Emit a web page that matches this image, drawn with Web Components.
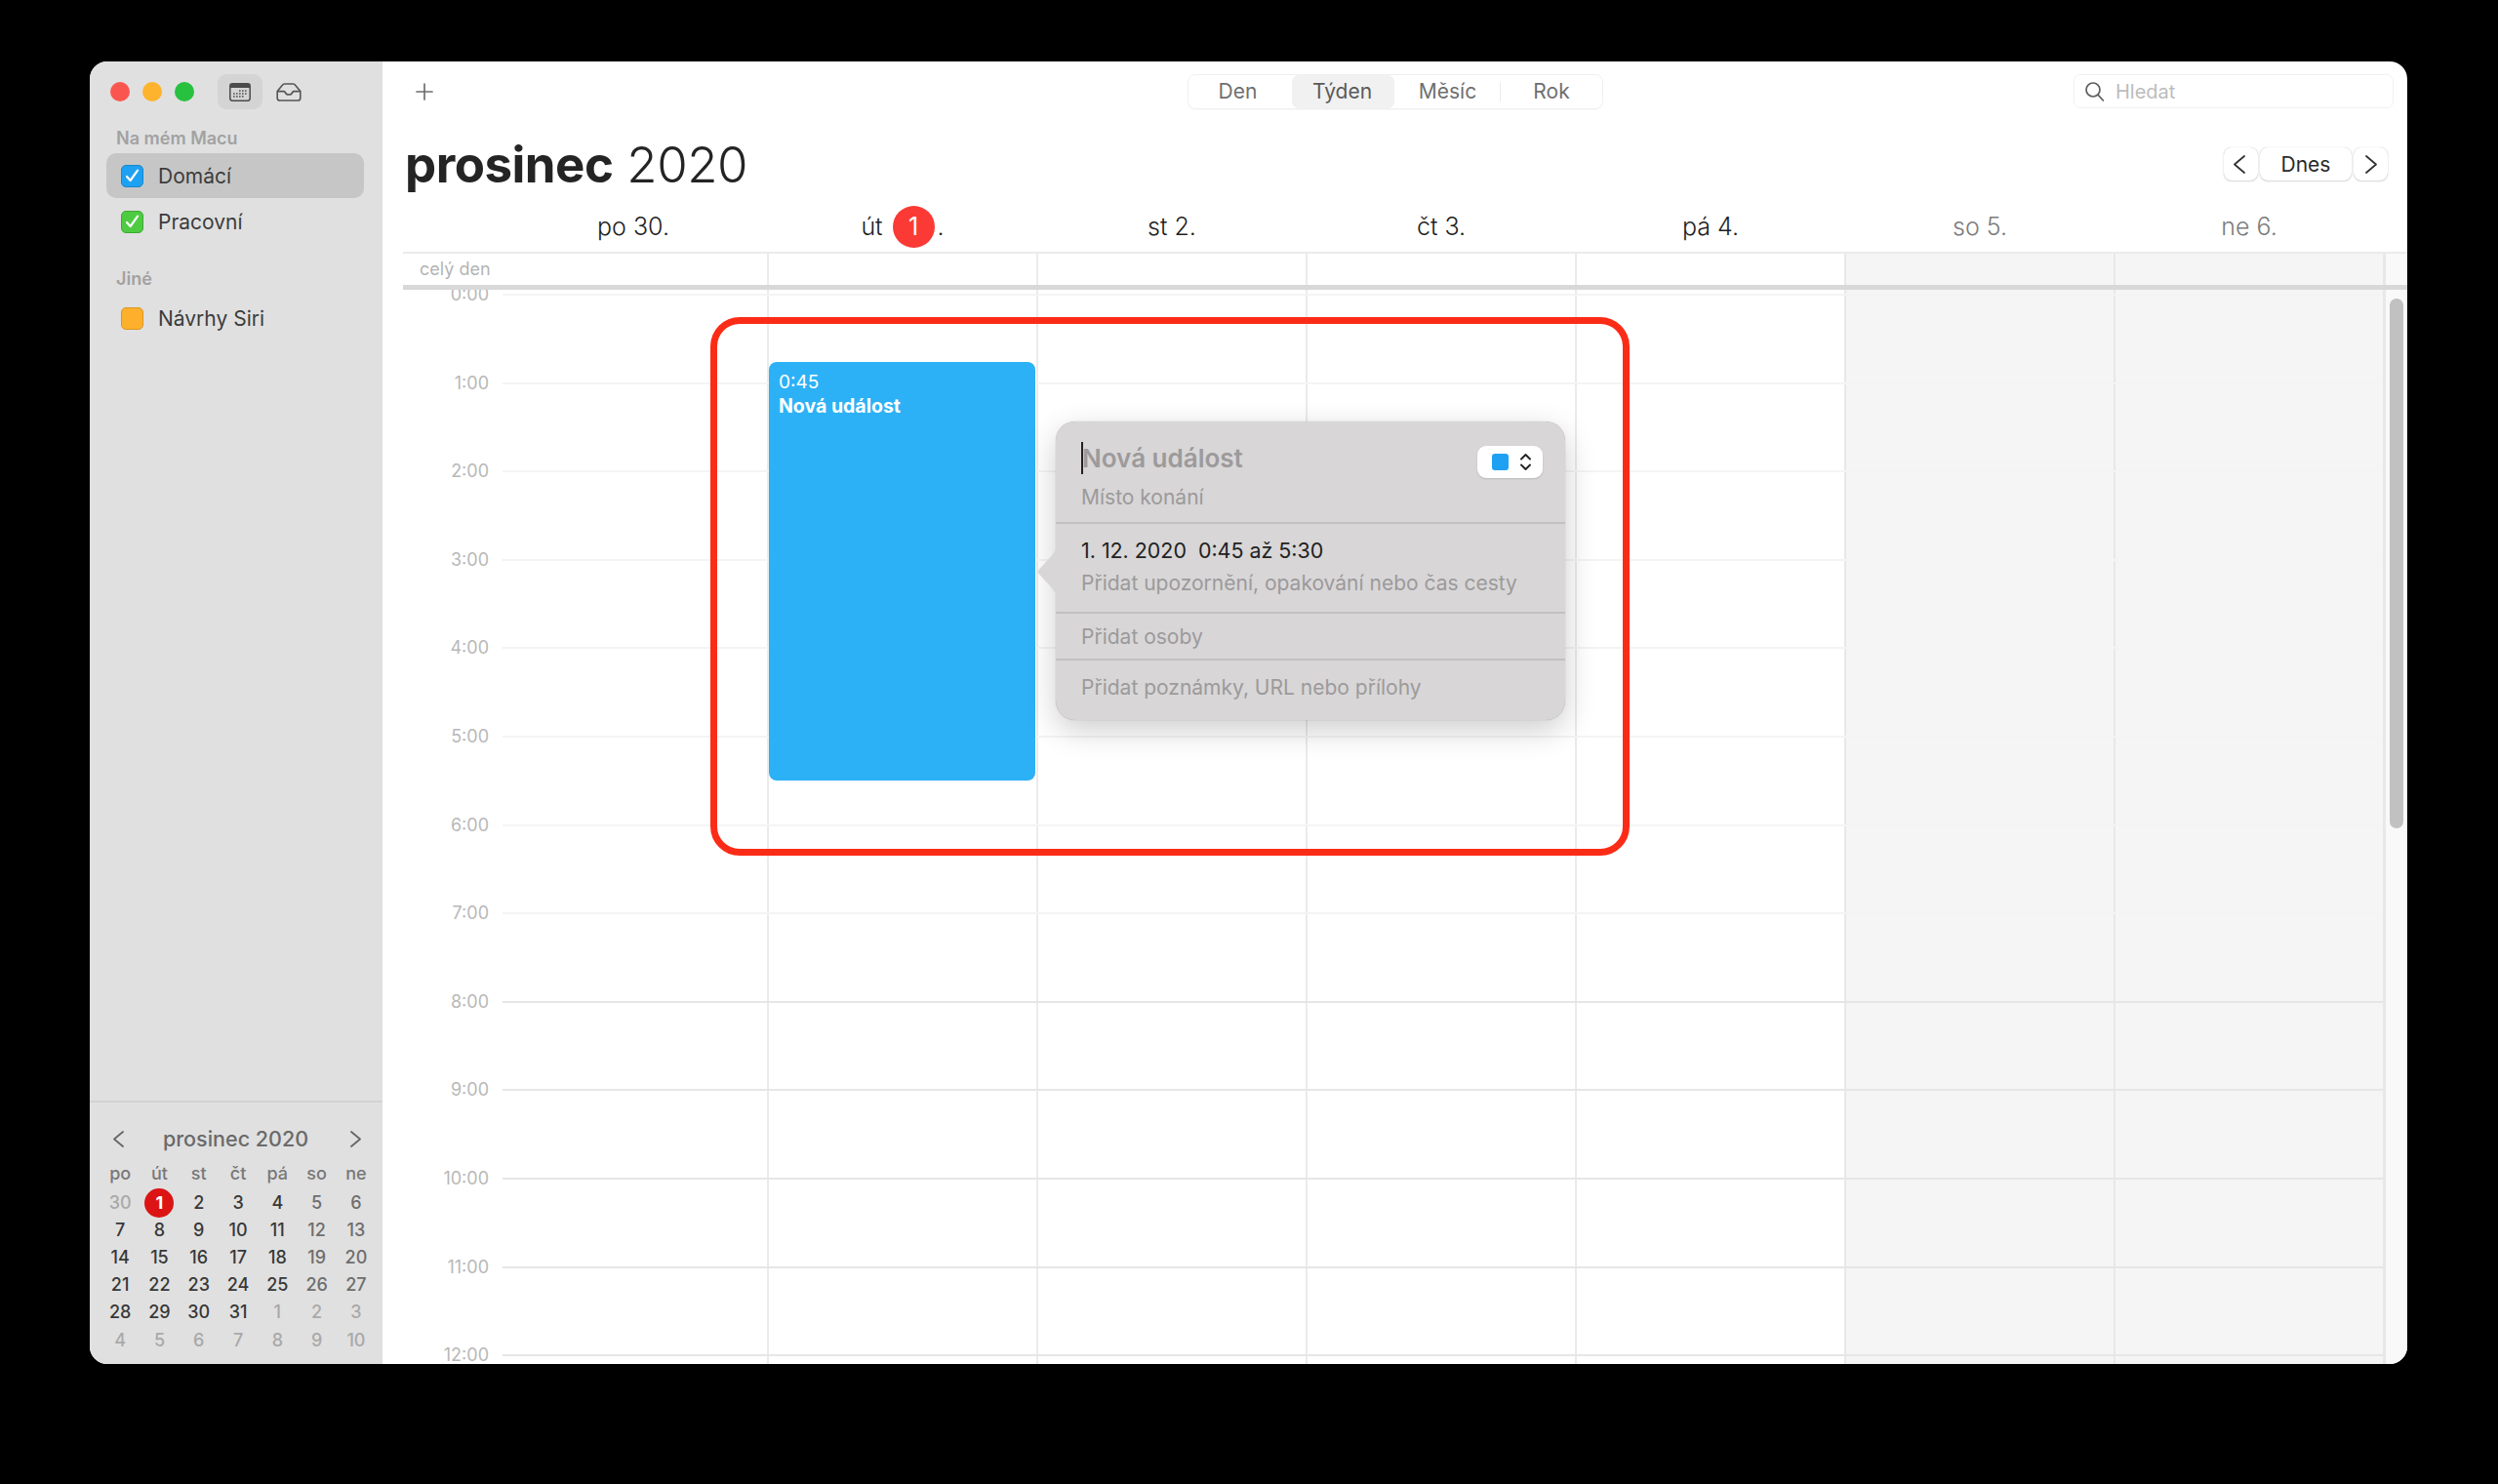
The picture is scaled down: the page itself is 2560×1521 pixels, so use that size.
<!DOCTYPE html>
<html lang="cs">
<head>
<meta charset="utf-8">
<title>Kalendář</title>
<style>
  html, body { margin: 0; background: #000; }
  body { height: 1521px; overflow: hidden; padding: 63px 0 0 92px; box-sizing: border-box; font-family: Inter, "Liberation Sans", sans-serif; }
</style>
</head>
<body>
<cal-window></cal-window>

<script>
// Small helper: every component gets an open shadow root filled with its markup
class CalElement extends HTMLElement {
  constructor() {
    super();
    this.attachShadow({ mode: 'open' });
  }
  connectedCallback() {
    this.shadowRoot.innerHTML = this.markup();
  }
}

const chevron = (dir, w, h, color, sw) => {
  const d = dir === 'left' ? `M${w - 1} 1 L1 ${h / 2} L${w - 1} ${h - 1}` : `M1 1 L${w - 1} ${h / 2} L1 ${h - 1}`;
  return `<svg width="${w}" height="${h}" viewBox="0 0 ${w} ${h}" fill="none" stroke="${color}" stroke-width="${sw}" stroke-linecap="round" stroke-linejoin="round"><path d="${d}"/></svg>`;
};

/* Sidebar calendar row with coloured checkbox */
class CalListItem extends CalElement {
  markup() {
    const color = this.getAttribute('color');
    const edge = this.getAttribute('edge');
    const checked = this.hasAttribute('checked');
    return `
      <style>
        :host { display: flex; align-items: center; height: 46px; margin: 0 19px 0 17px; padding-left: 15px; gap: 15px; border-radius: 10px; font-size: 21px; color: #3c3c3c; }
        :host([selected]) { background: #c6c6c6; }
        .box { width: 23px; height: 23px; box-sizing: border-box; border-radius: 5px; background: ${color}; border: 1px solid ${edge}; display: flex; align-items: center; justify-content: center; }
      </style>
      <span class="box">${checked ? `<svg width="15" height="14" viewBox="0 0 15 14" fill="none" stroke="#fff" stroke-width="2.2" stroke-linecap="round" stroke-linejoin="round"><path d="M2 8 L5.6 12 L13 1.6"/></svg>` : ''}</span>
      <slot></slot>`;
  }
}

/* Small month overview at the bottom of the sidebar */
class MiniMonth extends CalElement {
  markup() {
    const days = ['po', 'út', 'st', 'čt', 'pá', 'so', 'ne'];
    const prev = [30], next = [1, 2, 3, 4, 5, 6, 7, 8, 9, 10];
    const cells = [];
    prev.forEach(d => cells.push({ d, cls: 'out' }));
    for (let d = 1; d <= 31; d++) {
      const col = cells.length % 7;
      cells.push({ d, cls: d === 1 ? 'today' : (col > 4 ? 'end' : '') });
    }
    next.forEach(d => cells.push({ d, cls: 'out' }));
    return `
      <style>
        :host { display: block; border-top: 2px solid #d2d2d2; padding: 22px 6px 0 11px; height: 270px; box-sizing: border-box; }
        .head { display: flex; align-items: center; justify-content: space-between; height: 30px; padding: 0 16px 0 13px; font-size: 21.5px; font-weight: 500; color: #6a6a6a; }
        .head span { margin-right: 3px; }
        .grid { display: grid; grid-template-columns: repeat(7, 40.3px); grid-template-rows: 29.6px; grid-auto-rows: 28.2px; margin-top: 7px; font-size: 18px; font-weight: 500; text-align: center; line-height: 28px; color: #383838; }
        .dow { color: #787878; }
        .end { color: #6e6e6e; }
        .out { color: #a9a9a9; }
        .today { position: relative; color: #fff; font-weight: 700; z-index: 0; }
        .today::before { content: ""; position: absolute; z-index: -1; left: 5px; top: -1px; width: 30px; height: 30px; border-radius: 50%; background: #dc1414; }
      </style>
      <div class="head">${chevron('left', 11, 17, '#666', 1.8)}<span>prosinec 2020</span>${chevron('right', 11, 17, '#666', 1.8)}</div>
      <div class="grid">
        ${days.map(d => `<span class="dow">${d}</span>`).join('')}
        ${cells.map(c => `<span class="${c.cls}">${c.d}</span>`).join('')}
      </div>`;
  }
}

/* Left column: traffic lights, calendars list, mini month */
class CalSidebar extends CalElement {
  markup() {
    return `
      <style>
        :host { display: flex; flex-direction: column; width: 300px; flex: none; background: #e0e0e0; font-family: Inter, "Liberation Sans", sans-serif; }
        .bar { display: flex; align-items: center; height: 62px; padding: 0 0 0 21px; box-sizing: border-box; }
        .lights { display: flex; gap: 13px; }
        .lights i { width: 20px; height: 20px; border-radius: 50%; }
        .view { width: 46px; height: 36px; margin-left: 24px; border-radius: 9px; background: #d4d4d4; display: flex; align-items: center; justify-content: center; }
        .inbox { margin-left: 14px; display: flex; }
        h4 { margin: 0; font-size: 18px; line-height: 22px; font-weight: 600; color: #a2a2a2; padding-left: 27px; }
        .first { padding-top: 6px; padding-bottom: 4px; }
        .second { padding-top: 25px; padding-bottom: 6px; }
        .list { display: flex; flex-direction: column; gap: 0; }
        .grow { flex: 1; }
      </style>
      <div class="bar">
        <div class="lights">
          <i style="background:#fa5650"></i><i style="background:#fdb32d"></i><i style="background:#27c03f"></i>
        </div>
        <div class="view">
          <svg width="22" height="19" viewBox="0 0 22 19">
            <rect x=".8" y=".8" width="20.4" height="17.4" rx="2.4" fill="none" stroke="#4a4a4a" stroke-width="1.5"/>
            <path d="M1 3 Q1 1 3 1 H19 Q21 1 21 3 V5 H1Z" fill="#4a4a4a"/>
            <g fill="#5a5a5a"><rect x="10" y="7.3" width="1.6" height="1.6"/><rect x="13" y="7.3" width="1.6" height="1.6"/><rect x="16" y="7.3" width="1.6" height="1.6"/><rect x="4" y="10.2" width="1.6" height="1.6"/><rect x="7" y="10.2" width="1.6" height="1.6"/><rect x="10" y="10.2" width="1.6" height="1.6"/><rect x="13" y="10.2" width="1.6" height="1.6"/><rect x="16" y="10.2" width="1.6" height="1.6"/><rect x="4" y="13.1" width="1.6" height="1.6"/><rect x="7" y="13.1" width="1.6" height="1.6"/><rect x="10" y="13.1" width="1.6" height="1.6"/><rect x="13" y="13.1" width="1.6" height="1.6"/></g>
          </svg>
        </div>
        <div class="inbox">
          <svg width="26" height="19" viewBox="0 0 26 19" fill="none" stroke="#555" stroke-width="1.6" stroke-linejoin="round">
            <path d="M1.2 8.6 L6.4 2.2 Q7.2 1 8.6 1 H17.4 Q18.8 1 19.6 2.2 L24.8 8.6 V15.4 Q24.8 18 22.2 18 H3.8 Q1.2 18 1.2 15.4Z"/>
            <path d="M1.2 8.6 H8 Q8.8 8.6 9.2 9.6 Q10.2 12 13 12 Q15.8 12 16.8 9.6 Q17.2 8.6 18 8.6 H24.8"/>
          </svg>
        </div>
      </div>
      <div class="list">
        <h4 class="first">Na mém Macu</h4>
        <cal-list-item color="#1ea1f2" edge="#1786cd" checked selected>Domácí</cal-list-item>
        <div style="height:1px"></div>
        <cal-list-item color="#4fcb42" edge="#3cab31" checked>Pracovní</cal-list-item>
        <h4 class="second">Jiné</h4>
        <cal-list-item color="#fdb02b" edge="#dc9622">Návrhy Siri</cal-list-item>
      </div>
      <div class="grow"></div>
      <mini-month></mini-month>`;
  }
}

/* Top bar: add button, Den/Týden/Měsíc/Rok switch, search */
class CalToolbar extends CalElement {
  markup() {
    return `
      <style>
        :host { display: grid; grid-template-columns: 791px 426px 1fr; align-items: center; height: 61px; padding: 0 14px 0 34px; box-sizing: border-box; }
        .plus { display: flex; }
        .seg { display: grid; grid-template-columns: 106px 105px 109px 1fr; height: 36px; box-sizing: border-box; border: 1px solid #efefef; border-radius: 8px; font-size: 21px; color: #6f6f6f; box-shadow: 0 1px 1px rgba(0,0,0,.03); }
        .seg span { display: flex; align-items: center; justify-content: center; position: relative; }
        .seg .first { padding-right: 5px; }
        .seg .on { background: #f1f1f1; border-radius: 7px; color: #5a5a5a; padding-right: 2px; }
        .seg .sep::after { content: ""; position: absolute; right: 0; top: 7px; bottom: 7px; width: 1px; background: #ececec; }
        .search { justify-self: end; width: 328px; height: 35px; box-sizing: border-box; border: 1px solid #f1f1f1; border-radius: 7px; display: flex; align-items: center; gap: 11px; padding-left: 10px; font-size: 20px; color: #bcbcbc; }
      </style>
      <div class="plus"><svg width="18" height="18" viewBox="0 0 18 18" stroke="#6e6e6e" stroke-width="1.7" stroke-linecap="round"><path d="M9 1 V17 M1 9 H17"/></svg></div>
      <div class="seg"><span class="first">Den</span><span class="on">Týden</span><span class="sep">Měsíc</span><span>Rok</span></div>
      <div class="search">
        <svg width="21" height="22" viewBox="0 0 21 22" fill="none" stroke="#5e5e5e" stroke-width="1.7" stroke-linecap="round"><circle cx="9" cy="9" r="7"/><path d="M14 14.2 L19.4 20"/></svg>
        <span>Hledat</span>
      </div>`;
  }
}

/* Month title and today / prev / next buttons */
class CalHeading extends CalElement {
  markup() {
    return `
      <style>
        :host { display: flex; align-items: flex-start; justify-content: space-between; height: 82px; padding: 0 20px 0 23px; box-sizing: border-box; color: #242424; }
        h1 { margin: 0; font-size: 51px; line-height: 60px; font-weight: 300; letter-spacing: -.5px; padding-top: 15px; }
        b { font-weight: 700; }
        .nav { display: flex; gap: 2px; margin-top: 27px; }
        button { all: unset; display: flex; align-items: center; justify-content: center; width: 35px; height: 34px; box-sizing: border-box; background: #fff; border-radius: 8px; box-shadow: 0 0 1px rgba(0,0,0,.3), 0 1px 2px rgba(0,0,0,.14); font-size: 21px; color: #2a2a2a; }
        .back { padding-right: 4px; }
        .today { width: 94px; }
      </style>
      <h1><b>prosinec</b> 2020</h1>
      <div class="nav">
        <button class="back">${chevron('left', 12, 19, '#333', 1.8)}</button>
        <button class="today">Dnes</button>
        <button>${chevron('right', 12, 19, '#333', 1.8)}</button>
      </div>`;
  }
}

const WEEK_COLUMNS = 'grid-template-columns: 97px repeat(7, 276px) 25px;';

/* Weekday captions above the grid */
class DayHeaders extends CalElement {
  markup() {
    const names = ['po 30.', null, 'st 2.', 'čt 3.', 'pá 4.', 'so 5.', 'ne 6.'];
    return `
      <style>
        :host { display: grid; ${WEEK_COLUMNS} height: 52px; margin-left: 22px; font-size: 25px; font-weight: 300; color: #1f1f1f; align-items: center; }
        span { display: flex; justify-content: center; align-items: center; }
        .off { color: #7c7c7c; }
        .wrap { gap: 0; }
        .badge { width: 43px; height: 43px; border-radius: 50%; background: #fb3a35; color: #fff; font-weight: 400; display: flex; align-items: center; justify-content: center; margin: 0 3px 0 10px; }
      </style>
      <i></i>
      ${names.map((n, i) => n
        ? `<span class="${i > 4 ? 'off' : ''}">${n}</span>`
        : `<span class="wrap">út<span class="badge">1</span>.</span>`).join('')}`;
  }
}

/* All-day strip */
class AllDayRow extends CalElement {
  markup() {
    let cols = '';
    for (let i = 0; i < 7; i++) {
      cols += `<div class="${i > 4 ? 'wk' : ''} ${i > 0 ? 'ln' : ''}"></div>`;
    }
    return `
      <style>
        :host { display: grid; ${WEEK_COLUMNS} height: 39px; box-sizing: border-box; margin-left: 21px; border-top: 2px solid #ebebeb; border-bottom: 5px solid #d8d8d8; font-size: 18px; color: #b4b4b4; }
        .label { padding: 0 0 0 17px; line-height: 32px; white-space: nowrap; }
        .ln { border-left: 2px solid #ebebeb; }
        .wk { background: #f5f5f5; border-left: 2px solid #e8e8e8; }
        .rest { background: #f9f9f9; border-left: 3px solid #e8e8e8; }
      </style>
      <div class="label">celý den</div>${cols}<div class="rest"></div>`;
  }
}

/* Blue event block */
class EventBlock extends CalElement {
  markup() {
    return `
      <style>
        :host { position: absolute; left: 375px; top: 74px; width: 273px; height: 429px; background: #2db1f6; border-radius: 8px; color: #fff; padding: 8px 10px; box-sizing: border-box; font-size: 19px; line-height: 25px; }
        ::slotted(b) { font-weight: 700; font-size: 19.5px; display: block; }
      </style>
      <slot></slot>`;
  }
}

/* New-event popover with its arrow */
class EventPopover extends CalElement {
  markup() {
    return `
      <style>
        :host { position: absolute; left: 669px; top: 135px; width: 522px; height: 306px; box-sizing: border-box; background: #d8d6d7; border-radius: 20px; box-shadow: 0 0 1px rgba(0,0,0,.35), 0 10px 32px rgba(0,0,0,.2); font-size: 21px; color: #9c9a9b; display: flex; flex-direction: column; }
        .arrow { position: absolute; left: -19px; top: 128px; }
        section { padding: 0 26px; border-bottom: 2px solid #c2c0c1; box-sizing: border-box; position: relative; }
        section:last-child { border: 0; }
        .s1 { height: 105px; padding-top: 18px; }
        .s2 { height: 92px; padding-top: 13px; }
        .s3 { height: 48px; display: flex; align-items: center; }
        .s4 { flex: 1; display: flex; align-items: center; padding-top: 2px; padding-bottom: 8px; }
        .title { display: flex; align-items: center; height: 38px; font-size: 26px; font-weight: 600; }
        .caret { width: 2px; height: 33px; background: #222; margin-right: -1px; }
        .place { margin-top: 8px; line-height: 28px; }
        .date { color: #222; line-height: 28px; white-space: pre; font-size: 21.4px; }
        .more { margin-top: 6px; line-height: 28px; }
        .pick { position: absolute; right: 23px; top: 25px; width: 67px; height: 33px; background: #fff; border-radius: 9px; box-shadow: 0 1px 2px rgba(0,0,0,.14); display: flex; align-items: center; gap: 11px; padding-left: 15px; box-sizing: border-box; }
        .pick i { width: 17px; height: 17px; border-radius: 3px; background: #1ea1f2; }
      </style>
      <svg class="arrow" width="21" height="52" viewBox="0 0 21 52"><path d="M21 0 Q17 8 8 17 L1.5 24 Q0 26 1.5 28 L8 35 Q17 44 21 52Z" fill="#d8d6d7"/></svg>
      <section class="s1">
        <div class="title"><span class="caret"></span><span>Nová událost</span></div>
        <div class="place">Místo konání</div>
        <div class="pick"><i></i>
          <svg width="13" height="19" viewBox="0 0 13 19" fill="none" stroke="#222" stroke-width="1.9" stroke-linecap="round" stroke-linejoin="round"><path d="M2 6.5 L6.5 2 L11 6.5 M2 12.5 L6.5 17 L11 12.5"/></svg>
        </div>
      </section>
      <section class="s2">
        <div class="date">1. 12. 2020  0:45 až 5:30</div>
        <div class="more">Přidat upozornění, opakování nebo čas cesty</div>
      </section>
      <section class="s3">Přidat osoby</section>
      <section class="s4">Přidat poznámky, URL nebo přílohy</section>`;
  }
}

/* The scrolling week body: hours, day columns, scrollbar */
class WeekGrid extends CalElement {
  markup() {
    let cols = '', rows = '';
    for (let i = 0; i < 7; i++) {
      cols += `<div class="col ${i > 4 ? 'wk' : ''} ${i > 0 ? 'ln' : ''}" style="grid-column:${i + 2}"></div>`;
    }
    for (let h = 0; h <= 12; h++) {
      // lines before working hours are much fainter
      rows += `<div class="hr ${h < 8 ? 'early' : ''}" style="grid-row:${h + 2}"></div><div class="time" style="grid-row:${h + 2}">${h}:00</div>`;
    }
    return `
      <style>
        :host { display: block; position: relative; flex: 1; min-height: 0; overflow: hidden; margin-left: 21px; }
        .grid { display: grid; ${WEEK_COLUMNS} grid-template-rows: 4px repeat(13, 90.6px); font-size: 18px; color: #b8b8b8; }
        .col { grid-row: 1 / -1; }
        .ln { border-left: 2px solid #ebebeb; }
        .wk { background: #f5f5f5; border-left: 2px solid #e8e8e8; }
        .rest { grid-row: 1 / -1; grid-column: 9; background: #f9f9f9; border-left: 3px solid #e8e8e8; }
        .hr { grid-column: 1 / 9; margin-left: 102px; height: 2px; background: #e6e6e6; }
        .hr.early { background: #f4f4f4; }
        .time { grid-column: 1; justify-self: end; padding-right: 9px; transform: translateY(-8px); line-height: 18px; }
        .thumb { grid-row: 1 / -1; grid-column: 9; justify-self: end; margin: 9px 4px 0 0; width: 14px; height: 543px; border-radius: 7px; background: #c1c1c1; }
      </style>
      <div class="grid">${cols}<div class="rest"></div>${rows}<div class="thumb"></div></div>
      <slot></slot>`;
  }
}

/* The whole window */
class CalWindow extends CalElement {
  markup() {
    return `
      <style>
        :host { display: flex; position: relative; width: 2375px; height: 1335px; border-radius: 18px; overflow: hidden; background: #fff; font-family: Inter, "Liberation Sans", sans-serif; }
        main { flex: 1; min-width: 0; display: flex; flex-direction: column; }
        .mark { position: absolute; left: 636px; top: 262px; width: 942px; height: 552px; box-sizing: border-box; border: 7px solid #fb2c17; border-radius: 30px; pointer-events: none; }
      </style>
      <cal-sidebar></cal-sidebar>
      <main>
        <cal-toolbar></cal-toolbar>
        <cal-heading></cal-heading>
        <day-headers></day-headers>
        <all-day-row></all-day-row>
        <week-grid>
          <event-block>0:45<b>Nová událost</b></event-block>
          <event-popover></event-popover>
        </week-grid>
      </main>
      <div class="mark"></div>`;
  }
}

customElements.define('cal-list-item', CalListItem);
customElements.define('mini-month', MiniMonth);
customElements.define('cal-sidebar', CalSidebar);
customElements.define('cal-toolbar', CalToolbar);
customElements.define('cal-heading', CalHeading);
customElements.define('day-headers', DayHeaders);
customElements.define('all-day-row', AllDayRow);
customElements.define('event-block', EventBlock);
customElements.define('event-popover', EventPopover);
customElements.define('week-grid', WeekGrid);
customElements.define('cal-window', CalWindow);
</script>
</body>
</html>
